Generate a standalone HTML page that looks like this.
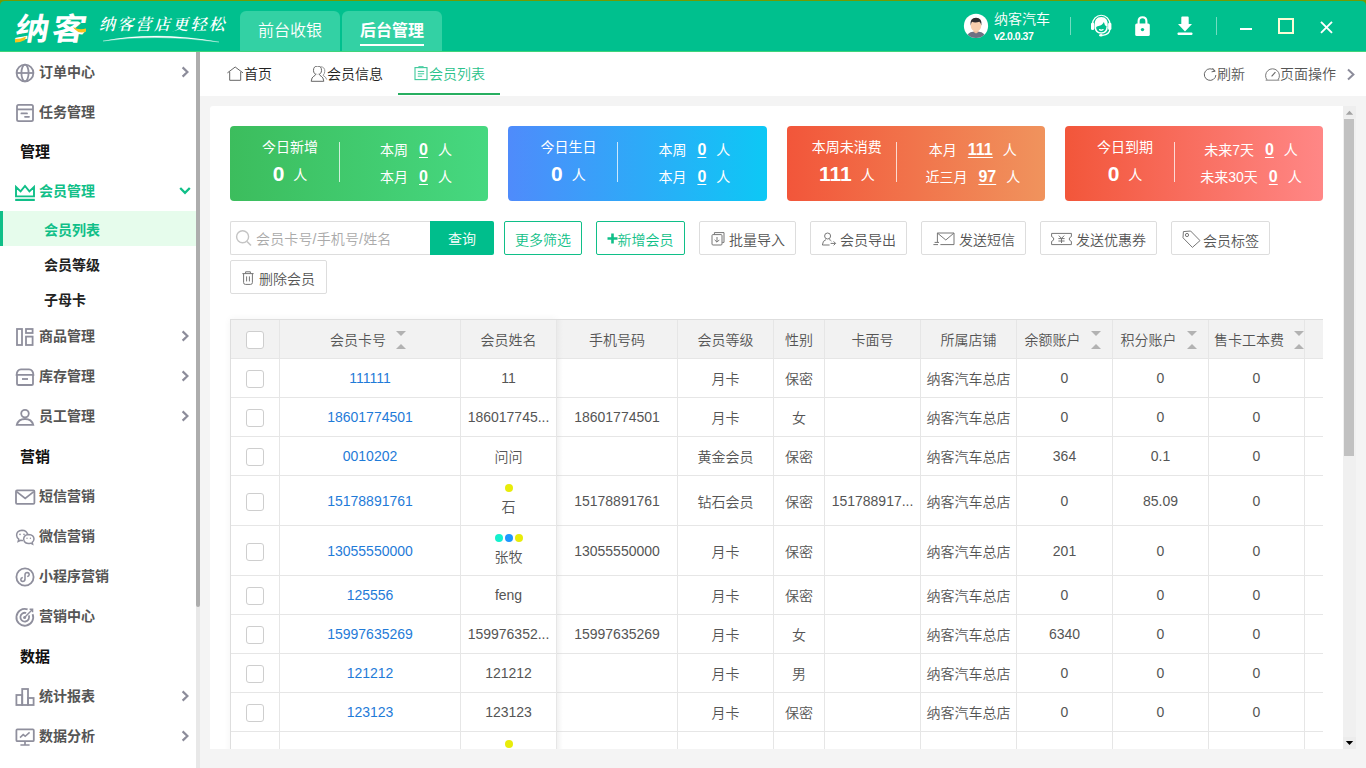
<!DOCTYPE html>
<html lang="zh-CN">
<head>
<meta charset="utf-8">
<title>纳客 - 会员列表</title>
<style>
*{box-sizing:border-box;margin:0;padding:0}
html,body{width:1366px;height:768px;overflow:hidden;background:#f4f4f4;font-family:"Liberation Sans","Noto Sans CJK SC",sans-serif;font-size:14px;color:#555;font-weight:350}
.abs{position:absolute}
#hdr{position:absolute;left:0;top:0;width:1366px;height:52px;background:#00c08e;border-bottom:1px solid #3fd47a}
#side{position:absolute;left:0;top:52px;width:196px;height:716px;background:#fff}
#sscroll{position:absolute;left:196px;top:52px;width:4px;height:716px;background:#e8e8e8}
#sscroll i{position:absolute;left:0;top:0;width:4px;height:555px;background:#adadad;border-radius:0 0 2px 2px}
#tabs{position:absolute;left:200px;top:52px;width:1166px;height:44px;background:#fff}
#panel{position:absolute;left:210px;top:106px;width:1146px;height:643px;background:#fff;border-radius:3px 0 0 0;overflow:hidden}

#logo{position:absolute;left:15.8px;top:6.5px;width:80px;height:40px;color:#fff;font-family:"Noto Sans CJK SC","Liberation Sans",sans-serif;font-weight:700;font-size:31px;line-height:40px;letter-spacing:2.4px;white-space:nowrap;transform-origin:0 50%;transform:scaleX(1.1) skewX(-9deg)}
#slogan{position:absolute;left:99px;top:12px;width:132px;height:24px;color:#fff;font-family:"Noto Serif CJK SC","Liberation Serif",serif;font-style:italic;font-size:16px;line-height:24px;letter-spacing:2.3px;white-space:nowrap;font-weight:600}
.htab{position:absolute;top:11px;width:100px;height:40px;background:#33d1a4;border-radius:6px 6px 0 0;color:#fff;font-size:16px;line-height:40px;text-align:center}
.htab b{font-weight:700;display:inline-block;position:relative}
.htab b:after{content:"";position:absolute;left:0;right:0;top:33px;height:2px;background:#fff}
#uname{position:absolute;left:994px;top:10px;color:#fff;font-size:14px;line-height:18px;white-space:nowrap}
#uver{position:absolute;left:994px;top:28px;color:#fff;font-size:10.5px;line-height:16px;font-weight:700;letter-spacing:-0.5px;white-space:nowrap}
.hdiv{position:absolute;top:17px;width:1px;height:18px;background:rgba(255,255,255,.45)}
.tb{position:absolute;top:0;height:44px;line-height:45px;font-size:14px;color:#222;white-space:nowrap}
.tb svg{position:absolute}

.mi{position:absolute;left:0;width:196px;height:40px;line-height:40px;font-size:14px;font-weight:700;color:#555;white-space:nowrap;padding-left:39px}
.mi svg.ic{position:absolute;left:14px;top:10px}
.mi svg.ch{position:absolute;left:179px;top:13px}
.mh{position:absolute;left:20px;height:40px;line-height:41px;font-size:15px;font-weight:700;color:#111;white-space:nowrap}
.ms{position:absolute;left:0;width:196px;height:35px;line-height:35px;font-size:14px;font-weight:700;color:#222;padding-left:44px;white-space:nowrap}
.ms.on{background:#e6fcec;color:#10bf88;border-left:3px solid #10bf88;padding-left:41px;line-height:38px}

.card{position:absolute;top:20px;font-weight:400;width:258.3px;height:75px;border-radius:4px;color:#fff;font-size:14px;white-space:nowrap}
.card .t{position:absolute;left:0;width:120px;top:11px;height:20px;line-height:20px;text-align:center}
.card .n{position:absolute;left:0;width:120px;top:33px;height:28px;line-height:28px;text-align:center}
.card .n b{font-size:21px;font-weight:700;margin-right:9px;position:relative;top:1px}
.card .dv{position:absolute;left:109px;top:16px;width:1px;height:40px;background:rgba(255,255,255,.75)}
.card .r{position:absolute;left:112px;width:148px;height:22px;line-height:22px;text-align:center}
.card .r u{font-size:16px;font-weight:700;margin:0 10px 0 11px;text-underline-offset:2px;text-decoration-thickness:1px}
.btn{position:absolute;height:34px;line-height:33px;padding-top:2px;border:1px solid #ddd;border-radius:2px;background:#fff;color:#555;font-size:14px;white-space:nowrap;text-align:center}
.btn.g{border-color:#10bf88;color:#10bf88}
.btn svg{position:absolute}
#tbl{position:absolute;left:20px;top:213px;width:1093px;height:440px;overflow:hidden;border-left:1px solid #dedede;border-top:1px solid #dedede}
.tr{display:flex;width:1200px;height:39px}
.tr.h50{height:50px}
.tr>div{flex:none;width:96px;height:100%;border-right:1px solid #e6e6e6;border-bottom:1px solid #e6e6e6;display:flex;align-items:center;justify-content:center;white-space:nowrap;overflow:hidden;color:#555;font-size:14px;position:relative}
.tr.th>div{background:#f2f2f2;color:#555}
.tr>div:nth-child(1){width:49px}
.tr>div:nth-child(2){width:181px}
.tr>div:nth-child(4){width:121px}
.tr>div:nth-child(6){width:51px}
.tr>div:nth-child(12){width:60px}
.tr a{color:#1f7bd8;text-decoration:none}
.cb{width:18px;height:18px;border:1px solid #cecece;border-radius:3px;background:#fff;display:block;margin-top:2px}
.so{display:inline-block;width:14px;height:19px;margin-left:10px;position:relative;flex:none;top:1px}
.so:before{content:"";position:absolute;left:0;top:0;border:5px solid transparent;border-top-color:#b2b2b2;border-bottom-width:0}
.so:after{content:"";position:absolute;left:0;top:13px;border:5px solid transparent;border-bottom-color:#b2b2b2;border-top-width:0}
.nm{flex-direction:column;padding-bottom:2px}
.nm .dots{height:8px;display:flex;gap:2px;margin-bottom:7px}
.nm .dots i{width:8px;height:8px;border-radius:50%;display:block}
.nm span{line-height:16px;height:16px}

#vsb{position:absolute;left:1133px;top:0;width:13px;height:643px;background:#f0f0f0}
</style>
</head>
<body>
<div id="hdr">
<svg class="abs" style="left:0;top:0" width="1366" height="8"><path d="M0 0H1366V6Q1366 1 1361 1H5Q0 1 0 6Z" fill="#749a02"/></svg>
<div id="logo">纳客</div>
<svg class="abs" style="left:12px;top:24px" width="80" height="22"><path d="M3 15 Q9 15 14 12.5 L13 16 Q8 18.5 3 18.5Z" fill="#f8c31c"/><path d="M61 3 Q67 6.5 74 4.5 L74 7.5 Q67 10 63 5.5Z" fill="#f8c31c"/></svg>
<div id="slogan">纳客营店更轻松</div>
<svg class="abs" style="left:100px;top:33px" width="125" height="12"><path d="M3 8 Q55 -2.4 119 9 Q55 .6 3 8Z" fill="#fff" stroke="#fff" stroke-width=".3"/></svg>
<div class="htab" style="left:240px">前台收银</div>
<div class="htab" style="left:342px"><b>后台管理</b></div>
<svg class="abs" style="left:963px;top:13px" width="26" height="26" viewBox="0 0 26 26"><defs><clipPath id="avc"><circle cx="13" cy="12.9" r="12.1"/></clipPath></defs><circle cx="13" cy="12.9" r="12.1" fill="#fff"/><g clip-path="url(#avc)"><path d="M3.4 26 Q4 19.2 10 18.8 L16 18.8 Q22 19.2 22.6 26Z" fill="#6f7183"/><path d="M10.6 16H15.4V19L13 20.6L10.6 19Z" fill="#f0bf9e"/><ellipse cx="13" cy="12.6" rx="5.3" ry="5.9" fill="#f8cfae"/><path d="M7.6 12.4 Q6.6 5 13 4.8 Q19.4 5 18.4 12.4 Q17.6 9.6 16.4 8.8 Q12 10.2 9 8.8 Q8.2 10 7.6 12.4Z" fill="#2f2d30"/></g></svg>
<div id="uname">纳客汽车</div>
<div id="uver">v2.0.0.37</div>
<div class="hdiv" style="left:1070px"></div>
<svg class="abs" style="left:1089px;top:13px" width="24" height="26" viewBox="0 0 24 26"><path d="M3.4 11.5A8.8 9.2 0 0 1 21 11.5" fill="none" stroke="#fff" stroke-width="1.1"/><path d="M5.6 13.6Q4.8 4 12.2 4Q19.6 4 18.8 13.6L17.4 13.6Q15.6 12.6 14.9 9Q13.2 12.6 9.6 12.9Q7.4 13 7 14.4Z" fill="#fff"/><path d="M6.2 13.4Q6.4 19.8 12.2 20Q18 19.8 18.2 13.4" fill="none" stroke="#fff" stroke-width="1.5"/><path d="M10 16.6Q12.2 18.2 14.4 16.6Q12.2 17.4 10 16.6Z" fill="#fff" stroke="#fff" stroke-width=".9" stroke-linejoin="round"/><rect x="2" y="9.4" width="3.3" height="7.6" rx="1.6" fill="#fff"/><rect x="19.1" y="9.4" width="3.3" height="7.6" rx="1.6" fill="#fff"/><path d="M20.9 16.4Q20.6 21.4 13.6 22.4" fill="none" stroke="#fff" stroke-width="1.2"/><ellipse cx="12" cy="22.3" rx="1.9" ry="1.3" fill="#fff"/></svg>
<svg class="abs" style="left:1134px;top:15px" width="18" height="22" viewBox="0 0 18 22"><path d="M4.6 9V6.2Q4.6 2.2 8.5 2.2Q12.4 2.2 12.4 6.2V9" fill="none" stroke="#fff" stroke-width="2.1"/><rect x="1.2" y="8.4" width="14.6" height="12.6" rx="1.6" fill="#fff"/><circle cx="8.5" cy="14.6" r="1.7" fill="#00c08e"/></svg>
<svg class="abs" style="left:1176px;top:15px" width="18" height="22" viewBox="0 0 18 22"><path d="M5.3 2.6Q5.3 1.6 6.3 1.6H11.7Q12.7 1.6 12.7 2.6V9H16L9 16.4L2 9H5.3Z" fill="#fff"/><rect x="1.6" y="17.4" width="14.8" height="2.6" rx=".8" fill="#fff"/></svg>
<div class="hdiv" style="left:1216px"></div>
<div class="abs" style="left:1240px;top:28px;width:12px;height:2px;background:#fff"></div>
<div class="abs" style="left:1278px;top:18px;width:16px;height:16px;border:2px solid #fbfcd6"></div>
<svg class="abs" style="left:1319px;top:20px" width="15" height="15" viewBox="0 0 15 15"><path d="M2 1.8L13 12.8M13 1.8L2 12.8" stroke="#fff" stroke-width="1.9" fill="none"/></svg>
</div>
<div id="side">
<div class="mi" style="top:0px"><svg class="ic" width="22" height="22" viewBox="0 0 22 22"><circle cx="11" cy="11" r="8.4" fill="none" stroke="#8f8f9d" stroke-width="1.8"/><ellipse cx="11" cy="11" rx="3.6" ry="8.4" fill="none" stroke="#8f8f9d" stroke-width="1.8"/><path d="M2.6 11H19.4" fill="none" stroke="#8f8f9d" stroke-width="1.8"/></svg>订单中心<svg class="ch" width="12" height="14" viewBox="0 0 12 14"><path d="M3.6 2.4L8.4 7L3.6 11.6" fill="none" stroke="#8c8c9a" stroke-width="2.2"/></svg></div>
<div class="mi" style="top:40px"><svg class="ic" width="22" height="22" viewBox="0 0 22 22"><rect x="3" y="2.8" width="16" height="16.4" rx="1.6" fill="none" stroke="#8f8f9d" stroke-width="1.8"/><path d="M3 7.4H19" fill="none" stroke="#8f8f9d" stroke-width="1.8"/><path d="M7.4 11.4H13M11 14.8H15" fill="none" stroke="#8f8f9d" stroke-width="1.8" stroke-linecap="round"/></svg>任务管理</div>
<div class="mh" style="top:79px">管理</div>
<div class="mi" style="top:119px;color:#10bf88"><svg class="ic" width="22" height="22" viewBox="0 0 22 22"><path d="M2 6L6.6 10.4L11 5L15.4 10.4L20 6V15.4H2Z" fill="none" stroke="#10bf88" stroke-width="1.9" stroke-linejoin="miter"/><path d="M1.2 18.9H20.8" stroke="#10bf88" stroke-width="2.2"/></svg>会员管理<svg class="ch" style="left:178px;top:14px" width="14" height="12" viewBox="0 0 14 12"><path d="M2.2 3L7 7.8L11.8 3" fill="none" stroke="#10bf88" stroke-width="2.3"/></svg></div>
<div class="ms on" style="top:159px">会员列表</div>
<div class="ms" style="top:196px">会员等级</div>
<div class="ms" style="top:230px;line-height:36px">子母卡</div>
<div class="mi" style="top:264px"><svg class="ic" width="22" height="22" viewBox="0 0 22 22"><rect x="3" y="3" width="5" height="16" fill="none" stroke="#8f8f9d" stroke-width="1.8"/><rect x="12" y="3" width="6.6" height="4" fill="none" stroke="#8f8f9d" stroke-width="1.8"/><rect x="12" y="10.6" width="6.6" height="8.4" fill="none" stroke="#8f8f9d" stroke-width="1.8"/></svg>商品管理<svg class="ch" width="12" height="14" viewBox="0 0 12 14"><path d="M3.6 2.4L8.4 7L3.6 11.6" fill="none" stroke="#8c8c9a" stroke-width="2.2"/></svg></div>
<div class="mi" style="top:304px"><svg class="ic" width="22" height="22" viewBox="0 0 22 22"><path d="M3 8.6V17.4Q3 19 4.6 19H17.4Q19 19 19 17.4V8.6" fill="none" stroke="#8f8f9d" stroke-width="1.8"/><path d="M2.6 8.8Q3 3.6 7 3.4H15Q19 3.6 19.4 8.8Z" fill="none" stroke="#8f8f9d" stroke-width="1.8"/><path d="M8 13H14" fill="none" stroke="#8f8f9d" stroke-width="1.8"/></svg>库存管理<svg class="ch" width="12" height="14" viewBox="0 0 12 14"><path d="M3.6 2.4L8.4 7L3.6 11.6" fill="none" stroke="#8c8c9a" stroke-width="2.2"/></svg></div>
<div class="mi" style="top:344px"><svg class="ic" width="22" height="22" viewBox="0 0 22 22"><circle cx="11" cy="7.6" r="3.8" fill="none" stroke="#8f8f9d" stroke-width="1.8"/><path d="M2.8 18.8Q4.4 13 11 13Q17.6 13 19.2 18.8Z" fill="none" stroke="#8f8f9d" stroke-width="1.8"/></svg>员工管理<svg class="ch" width="12" height="14" viewBox="0 0 12 14"><path d="M3.6 2.4L8.4 7L3.6 11.6" fill="none" stroke="#8c8c9a" stroke-width="2.2"/></svg></div>
<div class="mh" style="top:384px">营销</div>
<div class="mi" style="top:424px"><svg class="ic" width="22" height="22" viewBox="0 0 22 22"><rect x="2" y="4.4" width="18.4" height="13.4" rx="1" fill="none" stroke="#8f8f9d" stroke-width="1.8"/><path d="M2.6 5.6L11.2 12.4L19.8 5.6" fill="none" stroke="#8f8f9d" stroke-width="1.8"/></svg>短信营销</div>
<div class="mi" style="top:464px"><svg class="ic" width="22" height="22" viewBox="0 0 22 22"><path d="M13.6 8.4Q12.6 4.2 8 4.2Q2.6 4.6 2.6 9.2Q2.8 11.8 4.8 13.2L4.2 15.4L6.8 14.2Q8 14.6 9 14.4" fill="none" stroke="#8f8f9d" stroke-width="1.5"/><path d="M14.6 8.6Q19.8 8.8 20 13Q19.8 15.2 18.2 16.4L18.6 18.2L16.6 17.2Q10.2 18.4 9.6 13Q10 8.8 14.6 8.6Z" fill="none" stroke="#8f8f9d" stroke-width="1.5"/><circle cx="6" cy="8.4" r=".8" fill="#8f8f9d"/><circle cx="10" cy="8.4" r=".8" fill="#8f8f9d"/><circle cx="13" cy="12.2" r=".7" fill="#8f8f9d"/><circle cx="16.4" cy="12.2" r=".7" fill="#8f8f9d"/></svg>微信营销</div>
<div class="mi" style="top:504px"><svg class="ic" width="22" height="22" viewBox="0 0 22 22"><circle cx="11" cy="11" r="8.6" fill="none" stroke="#8f8f9d" stroke-width="1.8"/><path d="M11 8.4V13.4Q10.8 15.4 8.8 15.4Q6.8 15.2 6.8 13.4Q7 11.6 8.8 11.4M11 13.4V8.6Q11.2 6.6 13.2 6.6Q15.2 6.8 15.2 8.6Q15 10.4 13.2 10.6" fill="none" stroke="#8f8f9d" stroke-width="1.5"/></svg>小程序营销</div>
<div class="mi" style="top:544px"><svg class="ic" width="22" height="22" viewBox="0 0 22 22"><path d="M18.6 8.2A8.4 8.4 0 1 1 13.6 3.4" fill="none" stroke="#8f8f9d" stroke-width="1.8"/><path d="M14.8 9.4A4.4 4.4 0 1 1 12.2 7" fill="none" stroke="#8f8f9d" stroke-width="1.8"/><circle cx="10.6" cy="11.4" r="1.5" fill="#8f8f9d"/><path d="M10.8 11.2L18.4 3.4M15.6 3.2L18.6 3.2L18.6 6.2" fill="none" stroke="#8f8f9d" stroke-width="1.4"/></svg>营销中心</div>
<div class="mh" style="top:584px">数据</div>
<div class="mi" style="top:624px"><svg class="ic" width="22" height="22" viewBox="0 0 22 22"><rect x="2.4" y="9" width="5.8" height="10"  fill="none" stroke="#8f8f9d" stroke-width="1.8"/><rect x="8.2" y="3" width="5.8" height="16" fill="none" stroke="#8f8f9d" stroke-width="1.8"/><rect x="14" y="12" width="5.6" height="7" fill="none" stroke="#8f8f9d" stroke-width="1.8"/></svg>统计报表<svg class="ch" width="12" height="14" viewBox="0 0 12 14"><path d="M3.6 2.4L8.4 7L3.6 11.6" fill="none" stroke="#8c8c9a" stroke-width="2.2"/></svg></div>
<div class="mi" style="top:664px"><svg class="ic" width="22" height="22" viewBox="0 0 22 22"><rect x="2.4" y="3.4" width="17.4" height="11.8" rx="1" fill="none" stroke="#8f8f9d" stroke-width="1.8"/><path d="M11 15.2V19M6.4 19H15.6" fill="none" stroke="#8f8f9d" stroke-width="1.7"/><path d="M6 11.6L9.2 8.6L11.2 10.2L15.6 6.4" fill="none" stroke="#8f8f9d" stroke-width="1.5"/></svg>数据分析<svg class="ch" width="12" height="14" viewBox="0 0 12 14"><path d="M3.6 2.4L8.4 7L3.6 11.6" fill="none" stroke="#8c8c9a" stroke-width="2.2"/></svg></div>
</div>
<div id="sscroll"><i></i></div>
<div id="tabs">
<div class="tb" style="left:44px"><svg style="left:-17px;top:14px" width="17" height="16" viewBox="0 0 17 16"><path d="M.4 6.9L8.2 1L16 6.9M2.7 5.8V14.3H13.7V5.8" fill="none" stroke="#666" stroke-width="1"/></svg>首页</div>
<div class="tb" style="left:127px"><svg style="left:-17px;top:14px" width="18" height="17" viewBox="0 0 18 17"><path d="M10.4 .7Q14.9 .9 14.8 5.2Q14.6 8 13 9.4Q15.8 10.6 16.8 13.6" fill="none" stroke="#999" stroke-width="1"/><ellipse cx="7.5" cy="4.3" rx="4" ry="4.2" fill="#fff" stroke="#666" stroke-width="1"/><path d="M5.6 8.2Q5.4 9.6 3.8 10.2Q1.6 11.2 1.2 15.3H13.8Q13.4 11.2 11.2 10.2Q9.6 9.6 9.4 8.2" fill="#fff" stroke="#666" stroke-width="1"/></svg>会员信息</div>
<div class="tb" style="left:229px;color:#2ac28b"><svg style="left:-15px;top:14px" width="14" height="16" viewBox="0 0 14 16"><rect x="1" y="1.6" width="12" height="12" fill="none" stroke="#3cc99a" stroke-width="1.1"/><path d="M4.8 1.6V.4H9.2V1.6Z" fill="#8fdfc4" stroke="#3cc99a" stroke-width=".8"/><path d="M3.8 5.4H10.2M3.8 7.8H10.2M3.8 10.2H8.2" fill="none" stroke="#3cc99a" stroke-width="1"/></svg>会员列表</div>
<div class="abs" style="left:198px;top:41px;width:102px;height:2px;background:#27ae60"></div>
<div class="tb" style="left:1017px;color:#555"><svg style="left:-14px;top:15px" width="14" height="15" viewBox="0 0 14 15"><path d="M11.6 3.9A5.8 5.8 0 1 0 12.9 8" fill="none" stroke="#666" stroke-width="1"/><path d="M9.4 1L12.2 4.2L8.6 4.8" fill="none" stroke="#666" stroke-width="1"/></svg>刷新</div>
<div class="tb" style="left:1080px;color:#555"><svg style="left:-15px;top:15px" width="15" height="15" viewBox="0 0 15 15"><path d="M2.1 13A6.9 6.9 0 1 1 12.9 13" fill="none" stroke="#777" stroke-width="1"/><path d="M.6 13.2H14.4" stroke="#999" stroke-width="1.2"/><path d="M6.6 9.4L10.4 5.2" stroke="#666" stroke-width="1.1"/></svg>页面操作</div>
<svg class="abs" style="left:1146px;top:16px" width="10" height="13" viewBox="0 0 10 13"><path d="M2 1.6L7.4 6.5L2 11.4" fill="none" stroke="#8c8c9a" stroke-width="2"/></svg>
</div>
<div id="panel">
<div class="card" style="left:20px;background:linear-gradient(90deg,#3cbd5d,#46d880)"><div class="t">今日新增</div><div class="n"><b>0</b>人</div><i class="dv"></i><div class="r" style="top:13px">本周<u>0</u>人</div><div class="r" style="top:40px">本月<u>0</u>人</div></div>
<div class="card" style="left:298.4px;background:linear-gradient(90deg,#4f8bfb,#0dc8f5)"><div class="t">今日生日</div><div class="n"><b>0</b>人</div><i class="dv"></i><div class="r" style="top:13px">本周<u>0</u>人</div><div class="r" style="top:40px">本月<u>0</u>人</div></div>
<div class="card" style="left:576.8px;background:linear-gradient(90deg,#f2563a,#f0935d)"><div class="t">本周未消费</div><div class="n"><b>111</b>人</div><i class="dv"></i><div class="r" style="top:13px">本月<u>111</u>人</div><div class="r" style="top:40px">近三月<u>97</u>人</div></div>
<div class="card" style="left:855px;background:linear-gradient(90deg,#f2563a,#ff8786)"><div class="t">今日到期</div><div class="n"><b>0</b>人</div><i class="dv"></i><div class="r" style="top:13px">未来7天<u>0</u>人</div><div class="r" style="top:40px">未来30天<u>0</u>人</div></div>
<div class="abs" style="left:20px;top:115px;width:201px;height:34px;border:1px solid #ddd;border-right:0;border-radius:2px 0 0 2px;background:#fff"><svg class="abs" style="left:4px;top:7px" width="18" height="18" viewBox="0 0 18 18"><circle cx="7.6" cy="7.8" r="6" fill="none" stroke="#c4c4c4" stroke-width="1.4"/><path d="M12 12.4L16 16.6" stroke="#c4c4c4" stroke-width="1.5"/></svg><span class="abs" style="left:25px;top:0;line-height:34px;color:#aaa;font-size:14px;white-space:nowrap;letter-spacing:.15px">会员卡号/手机号/姓名</span></div>
<div class="abs" style="left:220px;top:115px;width:64px;height:34px;line-height:37px;background:#00be8c;color:#fff;text-align:center;border-radius:0 2px 2px 0;font-size:14px">查询</div>
<div class="btn g" style="left:294px;top:115px;width:78px">更多筛选</div>
<div class="btn g" style="left:386px;top:115px;width:89px;padding-left:10px"><svg style="left:10px;top:11px" width="11" height="11" viewBox="0 0 11 11"><path d="M5.5 .5V10.5M.5 5.5H10.5" stroke="#10bf88" stroke-width="2.6"/></svg>新增会员</div>
<div class="btn" style="left:489px;top:115px;width:97px;padding-left:19px"><svg style="left:10px;top:9px" width="16" height="16" viewBox="0 0 16 16"><path d="M4.4 3.4V1.6H14V11.4H12.2" fill="none" stroke="#777" stroke-width="1"/><rect x="2" y="3.6" width="10" height="10.4" rx="1" fill="none" stroke="#777" stroke-width="1"/><path d="M7 6V11M4.6 8.8L7 11.2L9.4 8.8" fill="none" stroke="#777" stroke-width="1"/></svg>批量导入</div>
<div class="btn" style="left:600px;top:115px;width:97px;padding-left:19px"><svg style="left:10px;top:9px" width="16" height="16" viewBox="0 0 16 16"><circle cx="6.6" cy="5" r="3" fill="none" stroke="#777" stroke-width="1"/><path d="M1.4 14Q1.6 9.6 5 8.6M8.2 8.6Q9.6 9 10.4 10M1.4 14H8.6" fill="none" stroke="#777" stroke-width="1"/><path d="M9.6 12.4H14.4M12.6 10.4L14.6 12.4L12.6 14.4" fill="none" stroke="#777" stroke-width="1"/></svg>会员导出</div>
<div class="btn" style="left:711px;top:115px;width:105px;padding-left:27px"><svg style="left:10px;top:9px" width="24" height="16" viewBox="0 0 24 16"><path d="M5.4 11.4V2H22V13.6H8.4" fill="none" stroke="#777" stroke-width="1"/><path d="M5.6 2.2L13.8 9L21.8 2.2" fill="none" stroke="#777" stroke-width="1"/><path d="M2.6 11.4H7M1.4 13.6H6" fill="none" stroke="#777" stroke-width="1"/></svg>发送短信</div>
<div class="btn" style="left:830px;top:115px;width:117px;padding-left:25px"><svg style="left:9px;top:9px" width="23" height="16" viewBox="0 0 23 16"><path d="M1.6 2.4H21.4V5.6Q19.2 6.4 19.2 8Q19.2 9.6 21.4 10.4V13.6H1.6V10.4Q3.8 9.6 3.8 8Q3.8 6.4 1.6 5.6Z" fill="none" stroke="#777" stroke-width="1"/><path d="M8.8 4.6L11.5 7.4L14.2 4.6M8.4 7.6H14.6M8.4 10H14.6M11.5 7.4V12" fill="none" stroke="#777" stroke-width="1"/></svg>发送优惠券</div>
<div class="btn" style="left:961px;top:115px;width:99px;padding-left:21px;padding-top:3px"><svg style="left:9px;top:7px" width="21" height="20" viewBox="0 0 21 20"><path d="M2.4 2.6L9.6 2L19 11.6L11.4 18.4L2 8.8Z" fill="none" stroke="#777" stroke-width="1" stroke-linejoin="round"/><circle cx="6" cy="6" r="1.6" fill="none" stroke="#777" stroke-width="1"/></svg>会员标签</div>
<div class="btn" style="left:20px;top:154px;width:97px;padding-left:17px"><svg style="left:10px;top:9px" width="14" height="16" viewBox="0 0 14 16"><path d="M1.4 3.6H12.6M4.6 3.4V1.8H9.4V3.4M2.6 3.8V12.6Q2.6 14.4 4.4 14.4H9.6Q11.4 14.4 11.4 12.6V3.8M5.6 6.4V11.4M8.4 6.4V11.4" fill="none" stroke="#777" stroke-width="1"/></svg>删除会员</div>
<div class="abs" style="left:20px;top:213px;width:327px;height:440px;background:#fff;box-shadow:0 0 7px rgba(0,0,0,.05)"></div>
<div id="tbl">
<div class="tr th"><div><i class="cb"></i></div><div>会员卡号<i class="so"></i></div><div>会员姓名</div><div>手机号码</div><div>会员等级</div><div>性别</div><div>卡面号</div><div>所属店铺</div><div>余额账户<i class="so"></i></div><div>积分账户<i class="so"></i></div><div style="justify-content:flex-start;padding-left:5px">售卡工本费<i class="so"></i></div><div></div></div>
<div class="tr"><div><i class="cb"></i></div><div><a>111111</a></div><div>11</div><div></div><div>月卡</div><div>保密</div><div></div><div>纳客汽车总店</div><div>0</div><div>0</div><div>0</div><div></div></div>
<div class="tr"><div><i class="cb"></i></div><div><a>18601774501</a></div><div>186017745...</div><div>18601774501</div><div>月卡</div><div>女</div><div></div><div>纳客汽车总店</div><div>0</div><div>0</div><div>0</div><div></div></div>
<div class="tr"><div><i class="cb"></i></div><div><a>0010202</a></div><div>问问</div><div></div><div>黄金会员</div><div>保密</div><div></div><div>纳客汽车总店</div><div>364</div><div>0.1</div><div>0</div><div></div></div>
<div class="tr h50"><div><i class="cb"></i></div><div><a>15178891761</a></div><div class="nm"><div class="dots"><i style="background:#e8ec0a"></i></div><span>石</span></div><div>15178891761</div><div>钻石会员</div><div>保密</div><div>151788917...</div><div>纳客汽车总店</div><div>0</div><div>85.09</div><div>0</div><div></div></div>
<div class="tr h50"><div><i class="cb"></i></div><div><a>13055550000</a></div><div class="nm"><div class="dots"><i style="background:#14f0cd"></i><i style="background:#1e96ff"></i><i style="background:#e8ec0a"></i></div><span>张牧</span></div><div>13055550000</div><div>月卡</div><div>保密</div><div></div><div>纳客汽车总店</div><div>201</div><div>0</div><div>0</div><div></div></div>
<div class="tr"><div><i class="cb"></i></div><div><a>125556</a></div><div>feng</div><div></div><div>月卡</div><div>保密</div><div></div><div>纳客汽车总店</div><div>0</div><div>0</div><div>0</div><div></div></div>
<div class="tr"><div><i class="cb"></i></div><div><a>15997635269</a></div><div>159976352...</div><div>15997635269</div><div>月卡</div><div>女</div><div></div><div>纳客汽车总店</div><div>6340</div><div>0</div><div>0</div><div></div></div>
<div class="tr"><div><i class="cb"></i></div><div><a>121212</a></div><div>121212</div><div></div><div>月卡</div><div>男</div><div></div><div>纳客汽车总店</div><div>0</div><div>0</div><div>0</div><div></div></div>
<div class="tr"><div><i class="cb"></i></div><div><a>123123</a></div><div>123123</div><div></div><div>月卡</div><div>保密</div><div></div><div>纳客汽车总店</div><div>0</div><div>0</div><div>0</div><div></div></div>
<div class="tr h50"><div><i class="cb"></i></div><div><a></a></div><div class="nm"><div class="dots"><i style="background:#e8ec0a"></i></div><span></span></div><div></div><div>月卡</div><div>保密</div><div></div><div>纳客汽车总店</div><div>0</div><div>0</div><div>0</div><div></div></div>
<div class="abs" style="left:326px;top:0;width:6px;height:440px;background:linear-gradient(90deg,rgba(0,0,0,.03),rgba(0,0,0,0))"></div>
</div>
<div id="vsb"><div class="abs" style="left:0;top:0;width:13px;height:12px;background:#eee"></div><div class="abs" style="left:0;top:631px;width:13px;height:12px;background:#ececec"></div><svg class="abs" style="left:2px;top:4px" width="9" height="6" viewBox="0 0 9 6"><path d="M.8 4.8L4.5 .8L8.2 4.8Z" fill="#a3a3a3"/></svg><div class="abs" style="left:1px;top:13px;width:10px;height:337px;background:#c1c1c1"></div><svg class="abs" style="left:2px;top:634px" width="9" height="6" viewBox="0 0 9 6"><path d="M.8 1L4.5 5L8.2 1Z" fill="#000"/></svg></div>
</div>
</body>
</html>
